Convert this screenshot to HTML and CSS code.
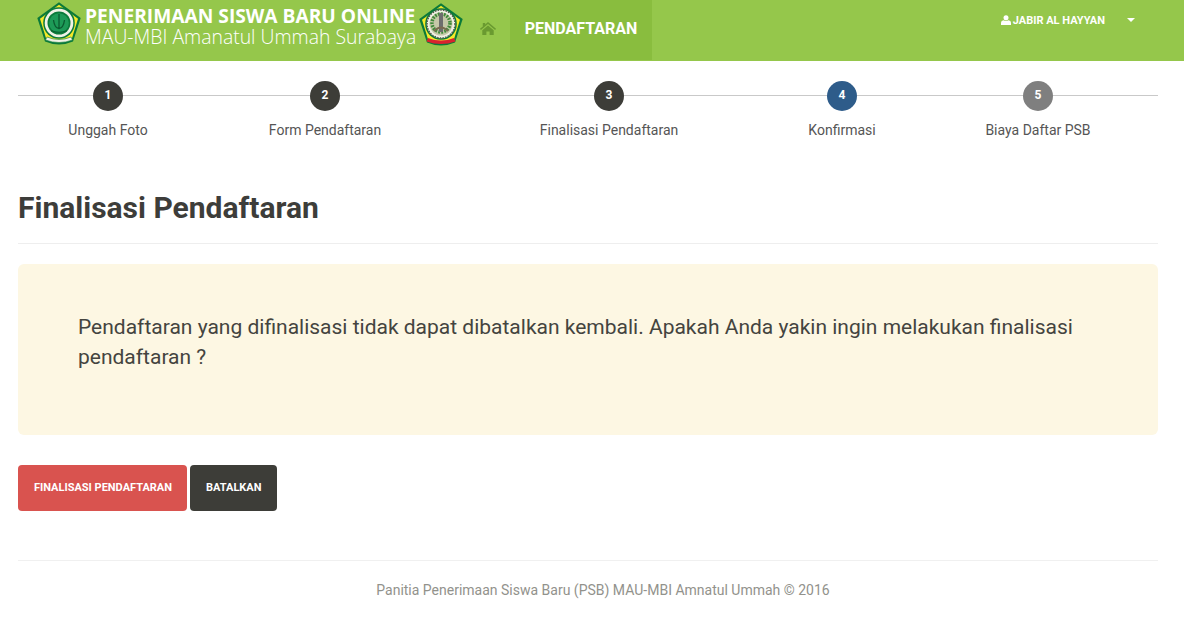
FILE: index.html
```html
<!DOCTYPE html>
<html lang="id">
<head>
<meta charset="utf-8">
<title>Finalisasi Pendaftaran</title>
<link rel="stylesheet" href="styles.css">
</head>
<body>
<svg class="defs" width="0" height="0" aria-hidden="true">
  <defs>
    <g id="shield">
      <path d="M22 .3 43.7 16 36 39.500Q22 45.500 8 39.500L.3 16Z" fill="#0b7a3a"/>
      <path d="M22 2.800 41 16.800 34.500 37.800Q22 42.800 9.500 37.800L3 16.800Z" fill="#f5e92a"/>
      <circle cx="22" cy="21" r="15.800" fill="#0b7a3a"/>
      <circle cx="22" cy="21" r="14.300" fill="#f1f2e6"/>
    </g>
  </defs>
</svg>
<header class="topbar">
  <div class="brand">
    <svg class="logo" viewBox="0 0 44 44"><use href="#shield"/><circle cx="22" cy="21" r="11.500" fill="#0b7a3a"/><circle cx="22" cy="21" r="9.800" fill="#1d9a57"/><path d="M22 12v15M16.500 18q1 8 5.500 8.500 4.500-.5 5.500-8.500" fill="none" stroke="#0a5a30" stroke-width="1.300"/><path d="M14 28.500q8 3.500 16 0" fill="none" stroke="#0a5a30" stroke-width="1"/><path d="M10 35q12 5 24 0l1.500 3q-13.500 5-27 0Z" fill="#f1f2e6" stroke="#0b7a3a" stroke-width=".6"/></svg>
    <div class="brand-text">
      <div class="brand-title">PENERIMAAN SISWA BARU ONLINE</div>
      <div class="brand-sub">MAU-MBI Amanatul Ummah Surabaya</div>
    </div>
    <svg class="logo logo-second" viewBox="0 0 44 44"><use href="#shield"/><circle cx="22" cy="21" r="14" fill="none" stroke="#55584a" stroke-width="1.500" stroke-dasharray="1.500 1.200"/><circle cx="22" cy="21" r="11.500" fill="#c5c8a8"/><circle cx="22" cy="20" r="9" fill="none" stroke="#3f8a3a" stroke-width="3.500" stroke-dasharray="1.800 1.200"/><path d="M20 10h4v19h-4Z" fill="#6d6d6d"/><path d="M15 28q7-7 14 0" fill="none" stroke="#7a6a50" stroke-width="1.800"/><path d="M9 35q13 5 26 0l1.500 3.500q-14.500 5-29 0Z" fill="#d8232f"/></svg>
  </div>
  <a class="home" href="#" aria-label="Beranda">
    <svg viewBox="0 0 16 13" width="16" height="13"><path d="M8 0 16 6.800l-.9 1.100L8 2 .9 7.900 0 6.800l2.800-2.400V1h2.400v1.400ZM2.300 8.300 8 3.500l5.700 4.800V13H9.600V9.500H6.400V13H2.300Z" fill="#6a9a30"/></svg>
  </a>
  <a class="nav-active" href="#">PENDAFTARAN</a>
  <div class="user">
    <svg viewBox="0 0 12 12" width="10" height="10"><circle cx="6" cy="3.300" r="3" fill="#fff"/><path d="M0 12V9.200Q0 6.500 3 6.200q3 1.500 6 0 3 .3 3 3V12Z" fill="#fff"/></svg>
    <span class="user-name">JABIR AL HAYYAN</span>
    <span class="caret"></span>
  </div>
</header>

<main class="page">
  <ol class="steps">
    <li class="step"><span class="dot">1</span><span class="step-label">Unggah Foto</span></li>
    <li class="step"><span class="dot">2</span><span class="step-label">Form Pendaftaran</span></li>
    <li class="step"><span class="dot">3</span><span class="step-label">Finalisasi Pendaftaran</span></li>
    <li class="step"><span class="dot dot-current">4</span><span class="step-label">Konfirmasi</span></li>
    <li class="step"><span class="dot dot-next">5</span><span class="step-label">Biaya Daftar PSB</span></li>
  </ol>

  <h1 class="title">Finalisasi Pendaftaran</h1>

  <div class="notice">
    <p>Pendaftaran yang difinalisasi tidak dapat dibatalkan kembali. Apakah Anda yakin ingin melakukan finalisasi pendaftaran ?</p>
  </div>

  <div class="actions">
    <a class="btn btn-danger" href="#">FINALISASI PENDAFTARAN</a>
    <a class="btn btn-dark" href="#">BATALKAN</a>
  </div>

  <footer class="footer">Panitia Penerimaan Siswa Baru (PSB) MAU-MBI Amnatul Ummah © 2016</footer>
</main>
</body>
</html>
```
FILE: styles.css
```css
* { box-sizing: border-box; }
html, body { margin: 0; padding: 0; }
body {
  font-family: Roboto, "Liberation Sans", sans-serif;
  color: #3d3d38;
  background: #fff;
}
a { text-decoration: none; color: inherit; }
.defs { display: block; height: 0; }

.topbar {
  display: flex;
  align-items: flex-start;
  height: 61px;
  background: #95c74b;
  color: #fff;
}
.brand {
  display: flex;
  align-items: flex-start;
  margin-left: 37px;
  padding-top: 2px;
  width: 426px;
  flex: none;
}
.logo { width: 44px; height: 44px; flex: none; }
.logo-second { margin: 1px 0 0 3px; }
.brand-text {
  margin-left: 4px;
  font-family: "Open Sans", sans-serif;
  white-space: nowrap;
  width: 331px;
  flex: none;
}
.brand-title { font-size: 19.2px; font-weight: 700; line-height: 21px; margin-top: 3px; }
.brand-sub { font-size: 19.4px; font-weight: 300; line-height: 21px; }
.home { margin-left: 17px; padding-top: 22px; width: 30px; display: block; line-height: 0; }
.nav-active {
  height: 60px;
  width: 142px;
  background: #89bd3e;
  text-align: center;
  line-height: 58px;
  font-size: 16px;
  font-weight: 700;
}
.user {
  margin-left: auto;
  margin-right: 49px;
  display: flex;
  align-items: center;
  height: 40px;
  font-size: 11px;
  font-weight: 700;
}
.user-name { margin-left: 2px; }
.caret {
  margin-left: 22px;
  width: 0; height: 0;
  border-left: 4.5px solid transparent;
  border-right: 4.5px solid transparent;
  border-top: 4.5px solid #fff;
}

.page { padding: 0 26px 0 18px; }
.steps {
  list-style: none;
  margin: 0;
  padding: 20px 0 0;
  display: grid;
  grid-template-columns: 180px 254px 314px 152px 240px;
  width: 1140px;
  background: linear-gradient(#c9c9c9, #c9c9c9) 0 34px / 100% 1px no-repeat;
}
.step { display: flex; flex-direction: column; align-items: center; }
.dot {
  width: 30px; height: 30px;
  border-radius: 50%;
  background: #3d3d38;
  color: #fff;
  font-size: 12px;
  font-weight: 700;
  line-height: 29px;
  text-align: center;
}
.dot-current { background: #2e5c8a; }
.dot-next { background: #7f7f7f; }
.step-label { margin-top: 9px; font-size: 14px; line-height: 20px; color: #555; white-space: nowrap; }

.title {
  width: 1140px;
  margin: 50px 0 20px;
  padding-bottom: 17px;
  border-bottom: 1px solid #eee;
  font-size: 30px;
  line-height: 36px;
  font-weight: 700;
  color: #3d3d3a;
}
.notice {
  width: 1140px;
  height: 171px;
  padding: 48px 60px 0;
  background: #fdf7e3;
  border-radius: 6px;
}
.notice p { margin: 0; font-size: 21px; line-height: 30px; color: #44443f; }

.actions { display: flex; gap: 3px; margin-top: 30px; }
.btn {
  height: 46px;
  border-radius: 4px;
  padding: 0 15px 0 16px;
  line-height: 45px;
  font-size: 11px;
  font-weight: 700;
  color: #fff;
}
.btn-danger { background: #d9534f; }
.btn-dark { background: #3d3d38; }

.footer {
  width: 1140px;
  margin-top: 49px;
  padding: 19px 0 0 30px;
  border-top: 1px solid #f0f0f0;
  text-align: center;
  font-size: 14px;
  line-height: 20px;
  color: #92928c;
}
```
